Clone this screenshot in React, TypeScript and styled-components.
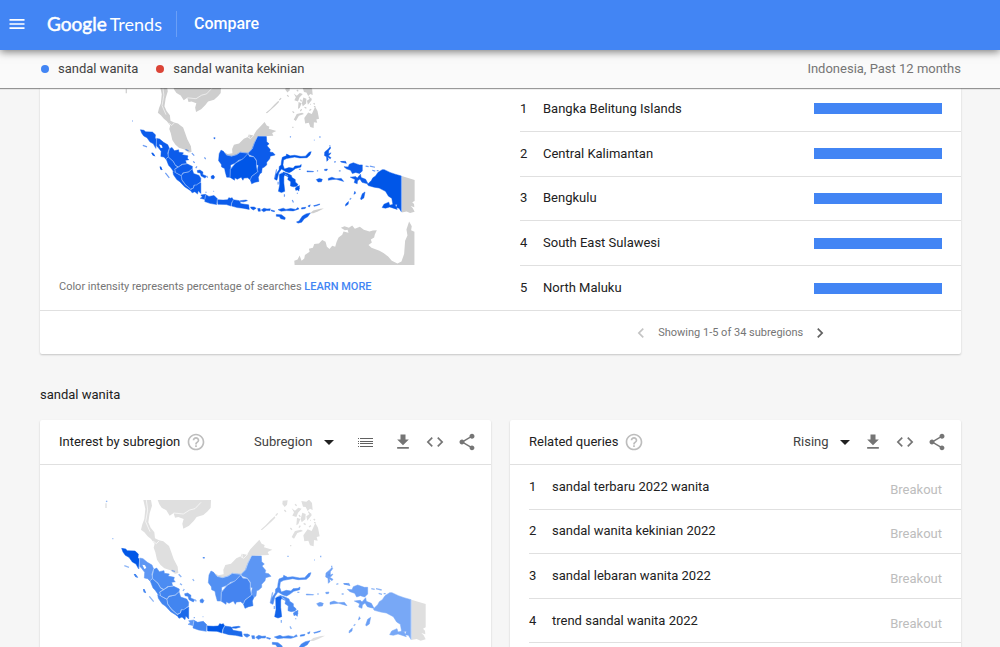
import React from "react";
import styled, { createGlobalStyle } from "styled-components";
import {
  MdArrowDropDown,
  MdChevronLeft,
  MdChevronRight,
  MdCode,
  MdFileDownload,
  MdHelpOutline,
  MdMenu,
  MdShare,
} from "react-icons/md";

const GlobalStyle = createGlobalStyle`
  *, *::before, *::after { box-sizing: border-box; }
  body {
    margin: 0;
    background: #f6f6f6;
    color: #212121;
    font: 13px/20px Roboto, "Liberation Sans", sans-serif;
  }
  button, select { font: inherit; color: inherit; }
  svg { display: block; }
`;

const Page = styled.div`
  display: flex;
  flex-direction: column;
  height: 100vh;
`;

const Header = styled.header`
  display: flex;
  align-items: center;
  flex: none;
  height: 50px;
  padding: 0 7px 2px;
  background: #4285f4;
  color: #fff;
  position: relative;
  z-index: 2;
  box-shadow: 0 2px 8px rgba(0, 0, 0, 0.5);
`;

const IconButton = styled.button<{ $color?: string }>`
  display: flex;
  padding: 0;
  border: 0;
  background: none;
  font-size: 20px;
  color: ${(p) => p.$color ?? "#757575"};
  cursor: pointer;
`;

const Logo = styled.a`
  display: flex;
  align-items: baseline;
  gap: 3px;
  margin-left: 20px;
  padding-right: 14px;
  border-right: 1px solid #6a9ff7;
  color: #fff;
  font: 18px/26px Lato, sans-serif;
  text-decoration: none;
`;

const LogoBrand = styled.span`
  font-size: 19px;
  font-weight: 400;
  -webkit-text-stroke: 0.5px #fff;
`;

const PageTitle = styled.h1`
  margin: 0 0 0 17px;
  font-size: 16px;
  font-weight: 500;
  line-height: 20px;
`;

const TermBar = styled.div`
  display: flex;
  align-items: center;
  flex: none;
  gap: 18px;
  height: 38px;
  padding: 0 39px 0 41px;
  background: #fafafa;
  color: #424242;
  position: relative;
  z-index: 1;
  box-shadow: 0 1px 1px rgba(0, 0, 0, 0.4);
`;

const Term = styled.span<{ $color: string }>`
  display: flex;
  align-items: center;
  gap: 9px;
  &::before {
    content: "";
    width: 8px;
    height: 8px;
    border-radius: 50%;
    background: ${(p) => p.$color};
  }
`;

const Scope = styled.span`
  margin-left: auto;
  color: #757575;
`;

const Main = styled.main`
  flex: 1;
  min-height: 0;
  padding: 0 39px 0 40px;
  overflow-y: auto;
  scrollbar-width: none;
`;

const Card = styled.section`
  min-width: 0;
  background: #fff;
  border-radius: 2px;
  box-shadow: 0 1px 2px rgba(0, 0, 0, 0.2);
`;

const OverviewCard = styled(Card)`
  margin-top: -1px;
`;

const Columns = styled.div`
  display: grid;
  grid-template-columns: 1fr 1fr;
  gap: 19px;
`;

const MapColumn = styled.div`
  display: flex;
  flex-direction: column;
  justify-content: space-between;
  padding: 0 19px 13px;
`;

const MapFrame = styled.div<{ $top?: number }>`
  display: flex;
  justify-content: center;
  padding-top: ${(p) => p.$top ?? 0}px;
`;

const Note = styled.p`
  margin: 0;
  color: #757575;
  font-size: 11px;
`;

const NoteLink = styled.a`
  color: #4285f4;
  font-weight: 500;
  text-decoration: none;
`;

const Rows = styled.ol<{ $inset: number; $closed?: boolean }>`
  display: flex;
  flex-direction: column;
  height: 223px;
  margin: 0;
  padding: 0 0 0 ${(p) => p.$inset}px;
  list-style: none;
  ${(p) => p.$closed && "& > :last-child { border-bottom: 0; }"}
`;

const Row = styled.li`
  display: flex;
  align-items: center;
  flex: 1;
  padding-right: 19px;
  border-bottom: 1px solid #e0e0e0;
`;

const Rank = styled.span`
  width: 23px;
`;

const Value = styled.span`
  margin-left: auto;
  padding-top: 6px;
  color: #bdbdbd;
`;

const Bar = styled.span`
  width: 128px;
  height: 11px;
  margin-left: auto;
  background: #4285f4;
`;

const Pager = styled.nav`
  display: flex;
  align-items: center;
  justify-content: center;
  gap: 7px;
  height: 44px;
  padding-left: 50%;
  border-top: 1px solid #e0e0e0;
  color: #757575;
  font-size: 11px;
`;

const SectionTitle = styled.h2`
  margin: 31px 0 15px;
  font-size: 13px;
  font-weight: 400;
  line-height: 20px;
`;

const CardHeader = styled.div`
  display: flex;
  align-items: center;
  height: 45px;
  padding: 0 14px 0 19px;
  border-bottom: 1px solid #e0e0e0;
`;

const CardTitle = styled.h3`
  margin: 0 6px 0 0;
  font-size: 13px;
  font-weight: 400;
`;

const Picker = styled.label`
  display: grid;
  align-items: center;
  margin-left: auto;
  color: #424242;
  select, svg { grid-area: 1 / 1; }
  svg {
    justify-self: end;
    font-size: 24px;
    color: #212121;
    pointer-events: none;
  }
  select {
    padding: 0 28px 0 0;
    border: 0;
    background: none;
    appearance: none;
  }
`;

const Actions = styled.div`
  display: flex;
  gap: 12px;
  margin-left: 6px;
`;

const ListButton = styled(IconButton)`
  margin: 0 6px 0 8px;
`;

type Palette = {
  land: string;
  line: string;
  regions: Record<string, string>;
  base: string;
};

const solid: Palette = {
  land: "#cecece",
  line: "#a9c8fa",
  base: "#0c5ceb",
  regions: { central: "#0056e8", papua: "#0056e8", sulawesi: "#0056e8", southSulawesi: "#0056e8" },
};

const graded: Palette = {
  land: "#dfdfdf",
  line: "#c3d9fb",
  base: "#4285f0",
  regions: {
    aceh: "#0057e7",
    northSumatra: "#5e97f4",
    riau: "#4c8cf2",
    lampung: "#1b69ea",
    banten: "#5e97f4",
    westJava: "#4285f0",
    centralJava: "#0057e7",
    eastJava: "#1b69ea",
    bali: "#4285f0",
    west: "#5290f3",
    central: "#4584f0",
    south: "#2f78ee",
    east: "#5c96f4",
    sulawesi: "#4a8af2",
    southSulawesi: "#1163ea",
    maluku: "#6a9ff5",
    birdsHead: "#6a9ff5",
    papua: "#78a8f6",
  },
};

const neighbours = [
  "M145 15H168L171 32 164 55 160 82 167 98 178 112 180 130 192 136 205 139 212 145 222 153 229 172 236 192 248 215 250 234 240 236 226 226 208 220 196 209 186 194 181 172 176 158 179 146 168 132 158 124 148 112 138 104 142 88 148 72 151 42Z",
  "M188 15H348L347 38 338 49 325 60 305 66 296 78 282 92 265 101 262 86 266 72 250 66 240 68 236 54 224 62 214 46 200 38 193 28Z",
  "M360 235 370 241 386 238 385 224 391 210 408 206 424 190 437 184 440 176 456 179 466 163 478 150 493 134 500 146 509 150 507 157 532 164 518 171 522 180 504 181 468 183 459 204 452 224 438 238 412 235 400 243 383 248 366 244Z",
  "M497 104 512 91 526 76 539 64 541 68 529 80 514 94 501 105Z",
  "M563 17 578 16 576 29 569 36 562 27Z",
  "M619 18 634 20 642 14 651 24 653 45 645 41 638 48 632 36 624 35Z",
  "M590 40 600 47 610 38 620 41 609 53 604 66 592 62 597 52Z",
  "M622 53 632 57 631 73 620 82 617 72Z M606 68 616 72 610 87 604 91Z M634 64 648 54 650 61 637 77Z",
  "M590 126 600 108 618 104 624 108 607 114 597 131Z",
  "M625 121 638 103 650 108 661 84 669 98 674 124 665 126 668 137 657 135 656 154 645 151 640 137 628 139Z",
  "M644 438 655 429 678 423 690 422 670 432 655 438Z",
  "M949 314 992 327V397L984 401 990 407 991 418 979 414 986 421 992 433 977 437 965 432 949 435Z",
];

const provinces: [string, string][] = [
  ["aceh", "M80 160 92 162 97 167 120 168 130 177 129 188 134 194 131 222 123 207 112 201 102 187 91 181 84 171Z"],
  ["northSumatra", "M134 189 144 191 157 202 171 210 176 222 171 238 173 249 165 258 158 251 148 249 149 232 139 219 133 213Z"],
  ["riau", "M177 223 185 219 193 230 207 227 208 235 223 237 219 243 238 247 236 255 241 260 230 262 233 273 218 274 207 283 196 277 189 264 172 251 173 242Z"],
  ["westSumatra", "M165 256 173 252 188 265 196 279 204 284 194 291 198 301 190 299 180 285 174 279Z"],
  ["jambi", "M205 285 220 276 236 274 253 282 252 291 240 300 221 303 216 312 197 303 195 292Z"],
  ["southSumatra", "M252 291 257 306 275 312 281 322 280 334 265 344 258 344 255 354 246 357 230 343 218 326 215 313 223 305 241 301Z"],
  ["bengkulu", "M188 299 197 303 216 314 218 328 229 344 246 357 246 362 227 350 211 333 201 326 190 310Z"],
  ["lampung", "M281 336 281 372 272 363 270 374 261 366 252 370 246 361 257 354 260 345Z"],
  ["bangka", "M269 296 278 294 288 301 287 309 299 314 295 321 282 314 279 304 270 302Z M315 315 322 311 327 317 323 324 316 322Z"],
  ["banten", "M281 377 297 375 295 392 279 388 286 384Z"],
  ["westJava", "M297 376 308 382 325 379 336 390 334 409 311 405 294 399Z"],
  ["centralJava", "M336 393 355 394 370 393 374 386 380 388 385 386 389 394 383 404 382 414 366 409 338 408Z"],
  ["eastJava", "M389 393 409 396 414 406 440 410 442 425 421 421 402 419 384 414 385 403Z M412 396 431 394 436 396 423 400 412 399Z"],
  ["bali", "M446 417 458 417 465 421 456 427 449 423Z M470 422 478 422 479 431 472 431Z M482 427 491 421 501 424 512 423 511 429 499 429 490 433Z"],
  ["bali", "M515 427 527 430 525 433 515 430Z M538 426 555 421 564 425 580 422 596 425 604 419 607 424 588 430 566 429 548 431Z M616 420 630 418 628 422 616 424Z M637 414 645 410 642 417Z M656 413 677 407 675 410 658 415Z"],
  ["bali", "M532 442 549 443 562 453 560 459 547 456 542 449 532 448Z M608 463 619 447 631 440 645 437 637 449 625 456 616 468 606 470Z M599 467 607 464 605 471Z"],
  ["west", "M348 228 356 232 362 240 366 244 383 248 400 243 412 235 438 238 433 249 421 257 407 261 395 271 380 277 379 298 378 318 367 318 362 300 360 289 350 284 349 275 340 263 342 240Z"],
  ["central", "M438 240 443 249 457 251 466 264 466 281 470 300 450 315 446 327 437 320 424 321 421 328 415 318 402 325 394 320 393 328 378 318 379 292 396 271 420 257Z"],
  ["south", "M469 293 477 307 472 318 474 332 461 335 450 340 445 326 451 315 468 302Z"],
  ["east", "M470 183 499 183 500 200 508 207 501 213 512 226 510 234 521 236 528 244 512 248 510 257 500 268 500 277 491 285 485 287 483 303 476 307 470 292 472 278 466 276 467 262 456 248 442 243 438 238 451 225 459 204Z"],
  ["sulawesi", "M549 266 552 252 565 247 566 241 578 247 593 245 614 249 629 248 641 235 648 233 644 244 634 253 610 254 593 251 566 256 556 261 554 277 559 291 574 286 588 288 594 281 609 280 615 276 614 284 596 289 584 298 575 303 564 300 549 291 540 304 534 328 527 325 531 308 541 293 542 282 548 277Z"],
  ["sulawesi", "M554 301 570 306 582 312 584 319 595 326 595 334 604 342 600 348 589 350 579 347 580 333 570 326 572 317 556 309Z M595 354 604 348 609 356 597 362Z M602 350 609 346 607 364 601 359Z"],
  ["southSulawesi", "M542 309 551 304 560 307 557 317 557 337 560 365 549 369 539 365 543 344Z"],
  ["maluku", "M693 234 705 224 711 217 713 221 706 230 706 240 714 237 709 244 702 248 705 260 700 265 699 250 692 246Z M703 246 714 253 711 257 703 251Z M692 292 702 291 700 296 693 296Z"],
  ["maluku", "M665 326 675 322 685 325 682 333 671 334Z M705 322 717 318 730 323 748 322 756 332 746 329 731 325 718 326 705 328Z M634 297 656 299 655 300 634 300Z"],
  ["maluku", "M745 266 762 265 765 272 754 269Z M763 407 772 399 771 408 762 414Z M812 390 818 373 827 367 823 387 814 393Z M790 375 793 365 796 371Z"],
  ["birdsHead", "M757 283 771 284 775 275 788 270 808 277 818 277 818 297 809 306 796 302 785 306 779 295 765 290Z M778 318 796 316 801 321 812 308 814 319 829 325 837 340 828 338 817 335 810 324 802 330 801 340 791 336 794 326Z"],
  ["papua", "M835 342 848 329 853 320 862 314 870 302 884 293 891 293 910 302 927 308 948 314V433L940 421 931 419 934 409 920 410 916 388 905 381 895 365 874 354 857 351 838 346Z M884 419 890 408 906 401 909 411 926 407 934 425 909 417 895 421Z"],
];

const borders =
  "M134 190 132 222M176 222 171 238 173 250 165 257M173 251 189 265 197 279 206 284 220 275 234 273M206 284 194 291 197 303 216 313 222 304 241 300 252 290M216 313 218 327 230 343 247 358 256 354 259 344 266 344 281 334M297 376 294 392M336 390 334 409M389 393 383 404 382 414M378 318 379 292 396 271 421 257 438 239 443 249 457 250 466 264 466 281 470 300 450 315 445 327M366 244 383 248 400 243 412 235 438 238 452 224 459 204 469 183M560 307 571 314M553 302 541 307M948 314V434";

const specks =
  "M33 20 37 18M52 131h3M88 212 102 217M118 238 127 246M146 283 152 294M163 304 176 320M323 188h6M293 252l4 6M251 238l8 8M255 266l6 4M230 226l10 4M264 288l4-6M300 314l4 5M533 292 526 324M607 292h6M577 184h4M677 182v5M657 195h2M724 268l6-2M747 267l10 0M829 281l10 2M843 281 860 285M851 295l10 3M866 296h6M559 375v8M585 394l4 8M667 297h4M740 297h6M708 214h4M700 240h4M776 392l5-4M538 333v9M602 370v3M296 368h4M323 365h2";

const greySpecks = "M645 76h2M656 72l4 4M586 99l5 5M657 83h5M585 152h4M626 85l6 4M612 98l4-6M568 45l5 5M600 28l5 4M642 96l6-4M548 55l-6 7M612 60l4 6M640 50l6 8M33 25v14";

const australia =
  "M45 255 44 242 54 238 60 226 66 242 74 235 76 225 90 215 88 206 100 203 104 192 118 190 128 180 138 185 142 200 150 207 158 197 167 200 171 186 177 172 188 164 192 154 207 158 204 149 196 150 184 143 195 138 208 143 218 136 226 146 241 140 253 149 270 154 280 151 292 150 286 163 284 172 274 178 277 187 267 195 276 203 300 212 312 219 326 229 337 242 354 250 366 244 374 222 377 182 384 166 381 148 389 124 397 138 395 150 405 155V255Z";

type RegionMapProps = { palette: Palette; viewBox: string; width: number; height: number };

const RegionMap = ({ palette, viewBox, width, height }: RegionMapProps) => (
  <svg width={width} height={height} viewBox={viewBox} role="img" aria-label="Map of Indonesia by subregion">
    <g fill={palette.land}>
      {neighbours.map((d) => (
        <path key={d} d={d} />
      ))}
      <path d={australia} transform="translate(543 328) scale(1.107)" />
    </g>
    <path d={greySpecks} fill="none" stroke={palette.land} strokeWidth="4" />
    <path
      d="M154 15 158 45 152 80 165 110M174 138 184 146 192 138M236 54 265 57 284 45 300 41 318 22M436 184 446 190 458 178M441 176 442 188"
      fill="none"
      stroke="#fff"
      strokeWidth="2"
    />
    <g strokeWidth="1.5" strokeLinejoin="round">
      {provinces.map(([name, d]) => {
        const color = palette.regions[name] ?? palette.base;
        return <path key={d} d={d} fill={color} stroke={color} />;
      })}
    </g>
    <path d={borders} fill="none" stroke={palette.line} strokeWidth="2" />
    <path d="M142 209 150 211 154 219 148 222Z" fill="#fff" />
    <path d={specks} fill="none" stroke={palette.base} strokeWidth="4" strokeOpacity="0.6" />
    <path
      d="M116 237 122 237 130 249 121 246ZM144 282 149 283 153 294 146 292ZM324 186 329 187 327 193Z"
      fill={palette.base}
    />
  </svg>
);

const ListIcon = () => (
  <svg width="20" height="20" viewBox="0 0 20 20" fill="#616161">
    <path d="M3 6h1v1H3zM5 6h13v1H5zM3 9h1v1H3zM5 9h13v1H5zM3 11h1v1H3zM5 11h13v1H5zM3 14h1v1H3zM5 14h13v1H5z" />
  </svg>
);

const CardActions = ({ list }: { list?: boolean }) => (
  <Actions>
    {list && (
      <ListButton aria-label="List view">
        <ListIcon />
      </ListButton>
    )}
    <IconButton aria-label="Download"><MdFileDownload /></IconButton>
    <IconButton aria-label="Embed"><MdCode /></IconButton>
    <IconButton aria-label="Share"><MdShare /></IconButton>
  </Actions>
);

const subregions = ["Bangka Belitung Islands", "Central Kalimantan", "Bengkulu", "South East Sulawesi", "North Maluku"];
const queries = [
  "sandal terbaru 2022 wanita",
  "sandal wanita kekinian 2022",
  "sandal lebaran wanita 2022",
  "trend sandal wanita 2022",
];

export default function App() {
  return (
    <Page>
      <GlobalStyle />
      <Header>
        <IconButton $color="#fff" aria-label="Menu"><MdMenu /></IconButton>
        <Logo href="#">
          <LogoBrand>Google</LogoBrand>
          <span>Trends</span>
        </Logo>
        <PageTitle>Compare</PageTitle>
      </Header>
      <TermBar>
        <Term $color="#4285f4">sandal wanita</Term>
        <Term $color="#db4437">sandal wanita kekinian</Term>
        <Scope>Indonesia, Past 12 months</Scope>
      </TermBar>
      <Main>
        <OverviewCard>
          <Columns>
            <MapColumn>
              <MapFrame>
                <RegionMap palette={solid} viewBox="0 18 992 592" width={299} height={178} />
              </MapFrame>
              <Note>
                Color intensity represents percentage of searches <NoteLink href="#">LEARN MORE</NoteLink>
              </Note>
            </MapColumn>
            <Rows $inset={10} $closed>
              {subregions.map((name, i) => (
                <Row key={name}>
                  <Rank>{i + 1}</Rank>
                  <span>{name}</span>
                  <Bar />
                </Row>
              ))}
            </Rows>
          </Columns>
          <Pager aria-label="Subregion pages">
            <IconButton $color="#c4c4c4" aria-label="Previous"><MdChevronLeft /></IconButton>
            <span>Showing 1-5 of 34 subregions</span>
            <IconButton $color="#616161" aria-label="Next"><MdChevronRight /></IconButton>
          </Pager>
        </OverviewCard>
        <SectionTitle>sandal wanita</SectionTitle>
        <Columns>
          <Card>
            <CardHeader>
              <CardTitle>Interest by subregion</CardTitle>
              <IconButton $color="#bdbdbd" aria-label="Help"><MdHelpOutline /></IconButton>
              <Picker>
                <select aria-label="Resolution"><option>Subregion</option></select>
                <MdArrowDropDown />
              </Picker>
              <CardActions list />
            </CardHeader>
            <MapFrame $top={35}>
              <RegionMap palette={graded} viewBox="30 15 963 600" width={321} height={200} />
            </MapFrame>
          </Card>
          <Card>
            <CardHeader>
              <CardTitle>Related queries</CardTitle>
              <IconButton $color="#bdbdbd" aria-label="Help"><MdHelpOutline /></IconButton>
              <Picker>
                <select aria-label="Sort"><option>Rising</option></select>
                <MdArrowDropDown />
              </Picker>
              <CardActions />
            </CardHeader>
            <Rows $inset={19}>
              {queries.map((query, i) => (
                <Row key={query}>
                  <Rank>{i + 1}</Rank>
                  <span>{query}</span>
                  <Value>Breakout</Value>
                </Row>
              ))}
              <Row />
            </Rows>
          </Card>
        </Columns>
      </Main>
    </Page>
  );
}
